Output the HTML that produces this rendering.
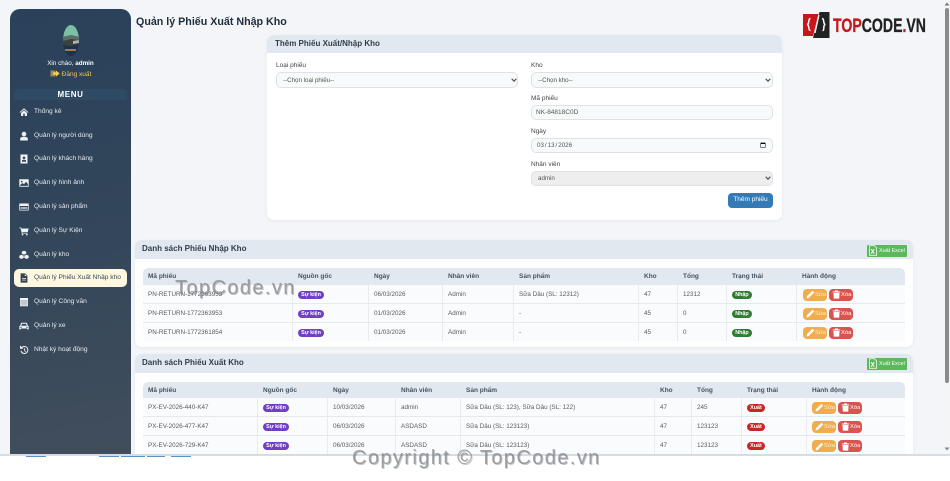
<!DOCTYPE html>
<html lang="vi"><head><meta charset="utf-8"><title>Quản lý Phiếu Xuất Nhập Kho</title>
<style>
*{box-sizing:border-box}
html,body{margin:0;padding:0;width:950px;height:481px;overflow:hidden;background:#fff;font-family:"Liberation Sans",sans-serif;color:#333}
#page{position:absolute;left:0;top:0;width:950px;height:455px;background:#f3f5f9;overflow:hidden}
.abs{position:absolute}
#side{position:absolute;left:10px;top:9px;width:121px;height:447px;border-radius:10px 10px 0 0;background:linear-gradient(170deg,#29415a 0%,#33465a 50%,#414e5c 100%)}
.mi{position:absolute;left:14px;width:113px;height:18px;color:#e6ebf0;font-size:6.6px;line-height:18px;padding-left:20px;white-space:nowrap}
.mi svg{position:absolute;left:5px;top:4px;width:10px;height:10px;fill:#f0f3f6}
.mi.on{background:#fff8e1;color:#3a4654;border-radius:5px}
.mi.on svg{fill:#33414f}
h1{position:absolute;left:136px;top:15px;margin:0;font-size:10.7px;line-height:14px;font-weight:700;color:#1f2d3a;white-space:nowrap}
.card{position:absolute;background:#fff;border-radius:7px;box-shadow:0 1px 3px rgba(0,0,0,.06);overflow:hidden}
.ch{height:18px;background:#e2e8f0;font-weight:700;font-size:8px;line-height:18px;color:#2f3d4a;padding-left:8px}
label{position:absolute;font-size:6.5px;line-height:8px;color:#444;white-space:nowrap}
select,input{position:absolute;margin:0;font-family:"Liberation Sans",sans-serif;font-size:6.5px;color:#555;background-color:#f8f9fa;border:1px solid #dde2e8;border-radius:5px;padding:0 4px;outline:0}
select{-webkit-appearance:none;appearance:none;font-size:6.2px;padding-left:6px}
input[type=date]{font-size:6.2px}
.chev{position:absolute;width:6px;height:4px}
.btn{position:absolute;left:461px;top:158px;width:45px;height:15px;background:#337ab7;border-radius:4px;color:#fff;font-size:6.5px;line-height:14px;text-align:center}
table{position:absolute;left:8px;width:762px;border-collapse:separate;border-spacing:0;table-layout:fixed;font-size:6.3px;color:#5a5a5a}
th{height:17px;background:#e2e8f0;text-align:left;font-weight:700;color:#44525f;padding:0 5px;font-size:6.5px}
th:first-child{border-top-left-radius:5px}th:last-child{border-top-right-radius:5px}
td{padding:0 5px;background:#fafbfc;border-bottom:1px solid #e6e8eb;border-right:1px solid #e9ebee;white-space:nowrap;overflow:hidden;vertical-align:middle}
td:last-child{border-right:0}
tr:last-child td{border-bottom:0}
.b{display:inline-block;height:8px;line-height:8px;border-radius:4px;color:#fff;font-weight:700;font-size:5.4px;text-align:center;vertical-align:middle;margin-top:1px}
.s{width:26px;background:#6f3fc6}
.n{width:20px;background:#2e7d32}
.x{width:18px;background:#c62828}
.a{display:inline-block;height:12px;width:24px;border-radius:4px;font-size:5.8px;line-height:12px;vertical-align:middle;margin-top:1px;position:relative;padding-left:12px}
.a svg{position:absolute;left:2.500px;top:1.500px;width:9px;height:9px;fill:#fff}
.e{background:#f0ad4e;color:#fbeed5;margin-right:2px}
.d{background:#d9534f;color:#fff}
.xl{position:absolute;left:732px;top:5px;width:40px;height:11.500px;background:#5cb85c;border-radius:1px;color:#fff;font-size:5.4px;line-height:12px;padding-left:12px;white-space:nowrap}
.xl svg{position:absolute;left:1px;top:0;width:10px;height:11px}
.wm{position:absolute;color:rgba(140,140,140,.8);font-family:"Liberation Sans",sans-serif;text-shadow:1px 1px 0 rgba(70,90,110,.35);white-space:nowrap;z-index:9}
</style></head><body>
<svg width="0" height="0" style="position:absolute"><defs>
<symbol id="pen" viewBox="0 0 10 10"><path d="M7.2.8l2 2-6 6L.6 9.4l.6-2.6z"/></symbol>
<symbol id="bin" viewBox="0 0 10 10"><path d="M3.5.6h3l.5 1h2.2v1H.8v-1H3zM1.6 3.2h6.8L8 9.6H2z"/></symbol>
<symbol id="xls" viewBox="0 0 10 11"><path d="M1.500.7h5l2.100 2.300v7.300H1.500z" fill="none" stroke="#eaf6ea" stroke-width=".9"/><path d="M3.200 4.200l3 4.400M6.200 4.200l-3 4.400" fill="none" stroke="#fff" stroke-width="1"/></symbol>
<symbol id="ch" viewBox="0 0 6 4"><path d="M.7.8L3 3.200 5.300.8" fill="none" stroke="#444" stroke-width="1.100"/></symbol>
</defs></svg>
<div id="page">
<div id="side"></div>
<svg class="abs" style="left:62px;top:24px" width="18" height="33" viewBox="0 0 18 33"><defs><clipPath id="av"><ellipse cx="9" cy="16.5" rx="8" ry="15.5"/></clipPath></defs><g clip-path="url(#av)"><rect width="18" height="33" fill="#1f3247"/><rect y="0" width="18" height="15" fill="#7dbfa6"/><path d="M0 13l9-2 9 2v6H0z" fill="#5d6d62"/><path d="M1 17l8-2 8 1v4l-8 2-8-1z" fill="#38423f"/><path d="M11 17l6-1v3l-6 1z" fill="#aab4b6"/><rect x="3" y="25" width="11" height="2" fill="#a57a4e"/></g></svg>
<div class="abs" style="left:10px;top:60px;width:121px;text-align:center;color:#fff;font-size:6.3px;line-height:8px">Xin chào, <b>admin</b></div>
<div class="abs" style="left:10px;top:70px;width:121px;text-align:center;color:#f1c84b;font-size:6.5px;line-height:8px"><svg width="10" height="7" viewBox="0 0 10 7" style="vertical-align:-1px;margin-right:2px"><rect x=".5" y=".5" width="5" height="6" fill="#f1c84b" opacity=".55"/><path d="M3 2.300h3V.5l3.700 3L6 6.500V4.700H3z" fill="#f6d04d"/></svg>Đăng xuất</div>
<div class="abs" style="left:14px;top:89px;width:113px;height:11px;border-radius:5px 5px 0 0;background:#2f4a64;color:#fff;font-weight:700;font-size:8px;line-height:11px;letter-spacing:.6px;text-align:center">MENU</div>

<div class="mi" style="top:103px"><svg viewBox="0 0 10 10"><path d="M5 1.200L.5 5.200l.6.6L5 2.500l3.900 3.300.6-.6zM2 6v3h2.200V6.800h1.600V9H8V6L5 3.400z"/></svg>Thống kê</div>
<div class="mi" style="top:127px"><svg viewBox="0 0 10 10"><circle cx="5" cy="3" r="2.300"/><path d="M1.200 9.500V7.600C1.200 6.300 3 5.700 5 5.700s3.800.6 3.800 1.900v1.900z"/></svg>Quản lý người dùng</div>
<div class="mi" style="top:150px"><svg viewBox="0 0 10 10"><path fill-rule="evenodd" d="M1.500.5h7v9h-7zM5 2.500a1.300 1.300 0 100 2.600 1.300 1.300 0 000-2.600zM3 7.800h4V6.600C7 6 6 5.700 5 5.700s-2 .3-2 .9z"/></svg>Quản lý khách hàng</div>
<div class="mi" style="top:174px"><svg viewBox="0 0 10 10"><path fill-rule="evenodd" d="M.3 1.300h9.400v7.400H.3zM1.100 2.100v5.800h7.800V6L7 3.800 5 6.200 3.500 5 1.100 7zM2.700 2.700a.9.900 0 100 1.800.9.900 0 000-1.800z"/></svg>Quản lý hình ảnh</div>
<div class="mi" style="top:198px"><svg viewBox="0 0 10 10"><path fill-rule="evenodd" d="M.3 1.500h9.400v7H.3zM1 4v3.800h8V4z"/><path d="M1.500 5h7v.7h-7zM1.500 6.300h7V7h-7z" opacity=".8"/></svg>Quản lý sản phẩm</div>
<div class="mi" style="top:222px"><svg viewBox="0 0 10 10"><path d="M.4 1.500h1.700l.3 1h7.200L8.800 6H3.200l.2.800h5.200v.7H2.800L1.600 2.200H.4z"/><circle cx="3.500" cy="8.600" r=".8"/><circle cx="7.800" cy="8.600" r=".8"/></svg>Quản lý Sự Kiện</div>
<div class="mi" style="top:246px"><svg viewBox="0 0 10 10"><path d="M5 .6l2.200 1v2.200L5 4.800 2.800 3.800V1.600zM2.500 4.700l2.200 1v2.200l-2.200 1.100L.3 7.900V5.700zM7.500 4.700l2.200 1v2.200L7.500 9 5.300 7.900V5.700z"/></svg>Quản lý kho</div>
<div class="mi on" style="top:269px"><svg viewBox="0 0 10 10"><path fill-rule="evenodd" d="M1.600.4h4.600l2.200 2.200v7H1.600zM5.800 1v2h2zM3 5h4v.7H3zM3 6.700h4v.7H3z"/></svg>Quản lý Phiếu Xuất Nhập kho</div>
<div class="mi" style="top:293px"><svg viewBox="0 0 10 10"><path fill-rule="evenodd" d="M1 1h8v8.300H1zM1.800 3v5.500h6.400V3z"/><path d="M1.800 3h6.400v5.500H1.800z" opacity=".75"/></svg>Quản lý Công văn</div>
<div class="mi" style="top:317px"><svg viewBox="0 0 10 10"><path fill-rule="evenodd" d="M2.300 1.800h5.400L9 4.800l.7.700v3H8.300v-1H1.700v1H.3v-3l.7-.7zM3 2.800L2.200 4.800h5.600L7 2.800zM2 5.600a.7.7 0 100 1.400.7.7 0 000-1.400zM8 5.600a.7.7 0 100 1.400.7.7 0 000-1.400z"/></svg>Quản lý xe</div>
<div class="mi" style="top:341px"><svg viewBox="0 0 10 10"><path d="M5.300 1A4 4 0 111.500 6.200l1-.4A3 3 0 105.300 2a3 3 0 00-2 .8l1 1H1V.5l1.500 1.500A4 4 0 015.300 1z"/><path d="M5 3.300h.8v2.200l1.400.9-.4.600L5 5.800z"/></svg>Nhật ký hoạt động</div>

<h1>Quản lý Phiếu Xuất Nhập Kho</h1>

<svg class="abs" style="left:802px;top:11px" width="126" height="28" viewBox="0 0 126 28"><path d="M1 3h15.500L11 25H1z" fill="#c8161d"/><path d="M17.500 1H27.500V27H11z" fill="#222"/><path d="M8.500 7.500C6.500 7.500 7 10.500 6.500 12 6 13.500 5 13.500 5 13.500s1 0 1.500 1.500S6.500 19.500 8.500 19.500" fill="none" stroke="#fff" stroke-width="1.500"/><path d="M20 7.500c2 0 1.500 3 2 4.500.5 1.500 1.500 1.500 1.500 1.500s-1 0-1.500 1.500.5 4.500-1.500 4.500" fill="none" stroke="#fff" stroke-width="1.500"/><path d="M17 4l-4 18" stroke="#fff" stroke-width="1.200"/><text x="31" y="21" font-family="Liberation Sans" font-weight="700" font-size="19" textLength="93" lengthAdjust="spacingAndGlyphs" fill="#222" stroke="#222" stroke-width=".3"><tspan fill="#c8161d" stroke="#c8161d">TOP</tspan>CODE<tspan fill="#c8161d" stroke="#c8161d">.</tspan>VN</text></svg>

<div class="card" style="left:267px;top:35px;width:515px;height:185px">
<div class="ch">Thêm Phiếu Xuất/Nhập Kho</div>
<label style="left:9px;top:27px">Loại phiếu</label>
<select style="left:9px;top:37px;width:242px;height:16px"><option>--Chọn loại phiếu--</option></select>
<svg class="chev" style="left:244px;top:43px"><use href="#ch"/></svg>
<label style="left:264px;top:27px">Kho</label>
<select style="left:264px;top:37px;width:242px;height:16px"><option>--Chọn kho--</option></select>
<svg class="chev" style="left:498px;top:43px"><use href="#ch"/></svg>
<label style="left:264px;top:60px">Mã phiếu</label>
<input style="left:264px;top:70px;width:242px;height:15px" value="NK-84818C0D">
<label style="left:264px;top:93px">Ngày</label>
<input type="date" style="left:264px;top:103px;width:242px;height:15px" value="2026-03-13">
<label style="left:264px;top:126px">Nhân viên</label>
<select style="left:264px;top:136px;width:242px;height:15px;background-color:#eee"><option>admin</option></select>
<svg class="chev" style="left:498px;top:141px"><use href="#ch"/></svg>
<div class="btn">Thêm phiếu</div>
</div>

<div class="card" style="left:135px;top:240px;width:778px;height:107px">
<div class="ch" style="height:19px;line-height:18px;padding-left:7px;font-size:8px">Danh sách Phiếu Nhập Kho</div>
<div class="xl"><svg><use href="#xls"/></svg>Xuất Excel</div>
<table style="top:28px"><colgroup><col style="width:150px"><col style="width:76px"><col style="width:74px"><col style="width:71px"><col style="width:125px"><col style="width:39px"><col style="width:49px"><col style="width:70px"><col style="width:108px"></colgroup>
<tr><th>Mã phiếu</th><th>Nguồn gốc</th><th>Ngày</th><th>Nhân viên</th><th>Sản phẩm</th><th>Kho</th><th>Tổng</th><th>Trạng thái</th><th>Hành động</th></tr>
<tr style="height:19px"><td>PN-RETURN-1772363953</td><td><span class="b s">Sự kiện</span></td><td>06/03/2026</td><td>Admin</td><td>Sữa Dâu (SL: 12312)</td><td>47</td><td>12312</td><td><span class="b n">Nhập</span></td><td style="padding-left:6px"><span class="a e"><svg><use href="#pen"/></svg>Sửa</span><span class="a d"><svg><use href="#bin"/></svg>Xóa</span></td></tr>
<tr style="height:19px"><td>PN-RETURN-1772363953</td><td><span class="b s">Sự kiện</span></td><td>01/03/2026</td><td>Admin</td><td>-</td><td>45</td><td>0</td><td><span class="b n">Nhập</span></td><td style="padding-left:6px"><span class="a e"><svg><use href="#pen"/></svg>Sửa</span><span class="a d"><svg><use href="#bin"/></svg>Xóa</span></td></tr>
<tr style="height:18px"><td>PN-RETURN-1772361854</td><td><span class="b s">Sự kiện</span></td><td>01/03/2026</td><td>Admin</td><td>-</td><td>45</td><td>0</td><td><span class="b n">Nhập</span></td><td style="padding-left:6px"><span class="a e"><svg><use href="#pen"/></svg>Sửa</span><span class="a d"><svg><use href="#bin"/></svg>Xóa</span></td></tr>
</table></div>

<div class="card" style="left:135px;top:354px;width:778px;height:120px">
<div class="ch" style="height:19px;line-height:17px;padding-left:7px;font-size:8px">Danh sách Phiếu Xuất Kho</div>
<div class="xl" style="top:4px">
<svg><use href="#xls"/></svg>Xuất Excel</div>
<table style="top:28px"><colgroup><col style="width:115px"><col style="width:70px"><col style="width:68px"><col style="width:65px"><col style="width:194px"><col style="width:37px"><col style="width:50px"><col style="width:65px"><col style="width:98px"></colgroup>
<tr><th style="height:16px">Mã phiếu</th><th style="height:16px">Nguồn gốc</th><th style="height:16px">Ngày</th><th style="height:16px">Nhân viên</th><th style="height:16px">Sản phẩm</th><th style="height:16px">Kho</th><th style="height:16px">Tổng</th><th style="height:16px">Trạng thái</th><th style="height:16px">Hành động</th></tr>
<tr style="height:19px"><td>PX-EV-2026-440-K47</td><td><span class="b s">Sự kiện</span></td><td>10/03/2026</td><td>admin</td><td>Sữa Dâu (SL: 123), Sữa Dâu (SL: 122)</td><td>47</td><td>245</td><td><span class="b x">Xuất</span></td><td><span class="a e"><svg><use href="#pen"/></svg>Sửa</span><span class="a d"><svg><use href="#bin"/></svg>Xóa</span></td></tr>
<tr style="height:19px"><td>PX-EV-2026-477-K47</td><td><span class="b s">Sự kiện</span></td><td>06/03/2026</td><td>ASDASD</td><td>Sữa Dâu (SL: 123123)</td><td>47</td><td>123123</td><td><span class="b x">Xuất</span></td><td><span class="a e"><svg><use href="#pen"/></svg>Sửa</span><span class="a d"><svg><use href="#bin"/></svg>Xóa</span></td></tr>
<tr style="height:19px"><td>PX-EV-2026-729-K47</td><td><span class="b s">Sự kiện</span></td><td>06/03/2026</td><td>ASDASD</td><td>Sữa Dâu (SL: 123123)</td><td>47</td><td>123123</td><td><span class="b x">Xuất</span></td><td><span class="a e"><svg><use href="#pen"/></svg>Sửa</span><span class="a d"><svg><use href="#bin"/></svg>Xóa</span></td></tr>
</table></div>

<div class="abs" style="left:943px;top:0;width:7px;height:455px;background:#f4f5f7"></div>
<div class="abs" style="left:945px;top:8px;width:4px;height:375px;background:#8a8a8a;border-radius:2px"></div>
<svg class="abs" style="left:944px;top:2px" width="6" height="4"><path d="M3 .5L5.500 3.500H.5z" fill="#777"/></svg>
<svg class="abs" style="left:944px;top:447px" width="6" height="4"><path d="M3 3.500L5.500 .5H.5z" fill="#888"/></svg>
</div>

<div class="abs" style="left:0;top:454px;width:950px;height:2px;background:#d3dde3"></div>
<div class="abs" style="left:26px;top:456px;width:20px;height:1px;background:#5b93c7"></div>
<div class="abs" style="left:99px;top:456px;width:20px;height:1px;background:#5b93c7"></div>
<div class="abs" style="left:121px;top:456px;width:24px;height:1px;background:#5b93c7"></div>
<div class="abs" style="left:147px;top:456px;width:18px;height:1px;background:#5b93c7"></div>
<div class="abs" style="left:171px;top:456px;width:20px;height:1px;background:#5b93c7"></div>

<div class="wm" style="left:175px;top:277px;font-size:20px;line-height:23px;letter-spacing:1.4px">TopCode.vn</div>
<div class="wm" style="left:352px;top:447px;font-size:20px;line-height:23px;letter-spacing:1.4px">Copyright © TopCode.vn</div>
</body></html>
